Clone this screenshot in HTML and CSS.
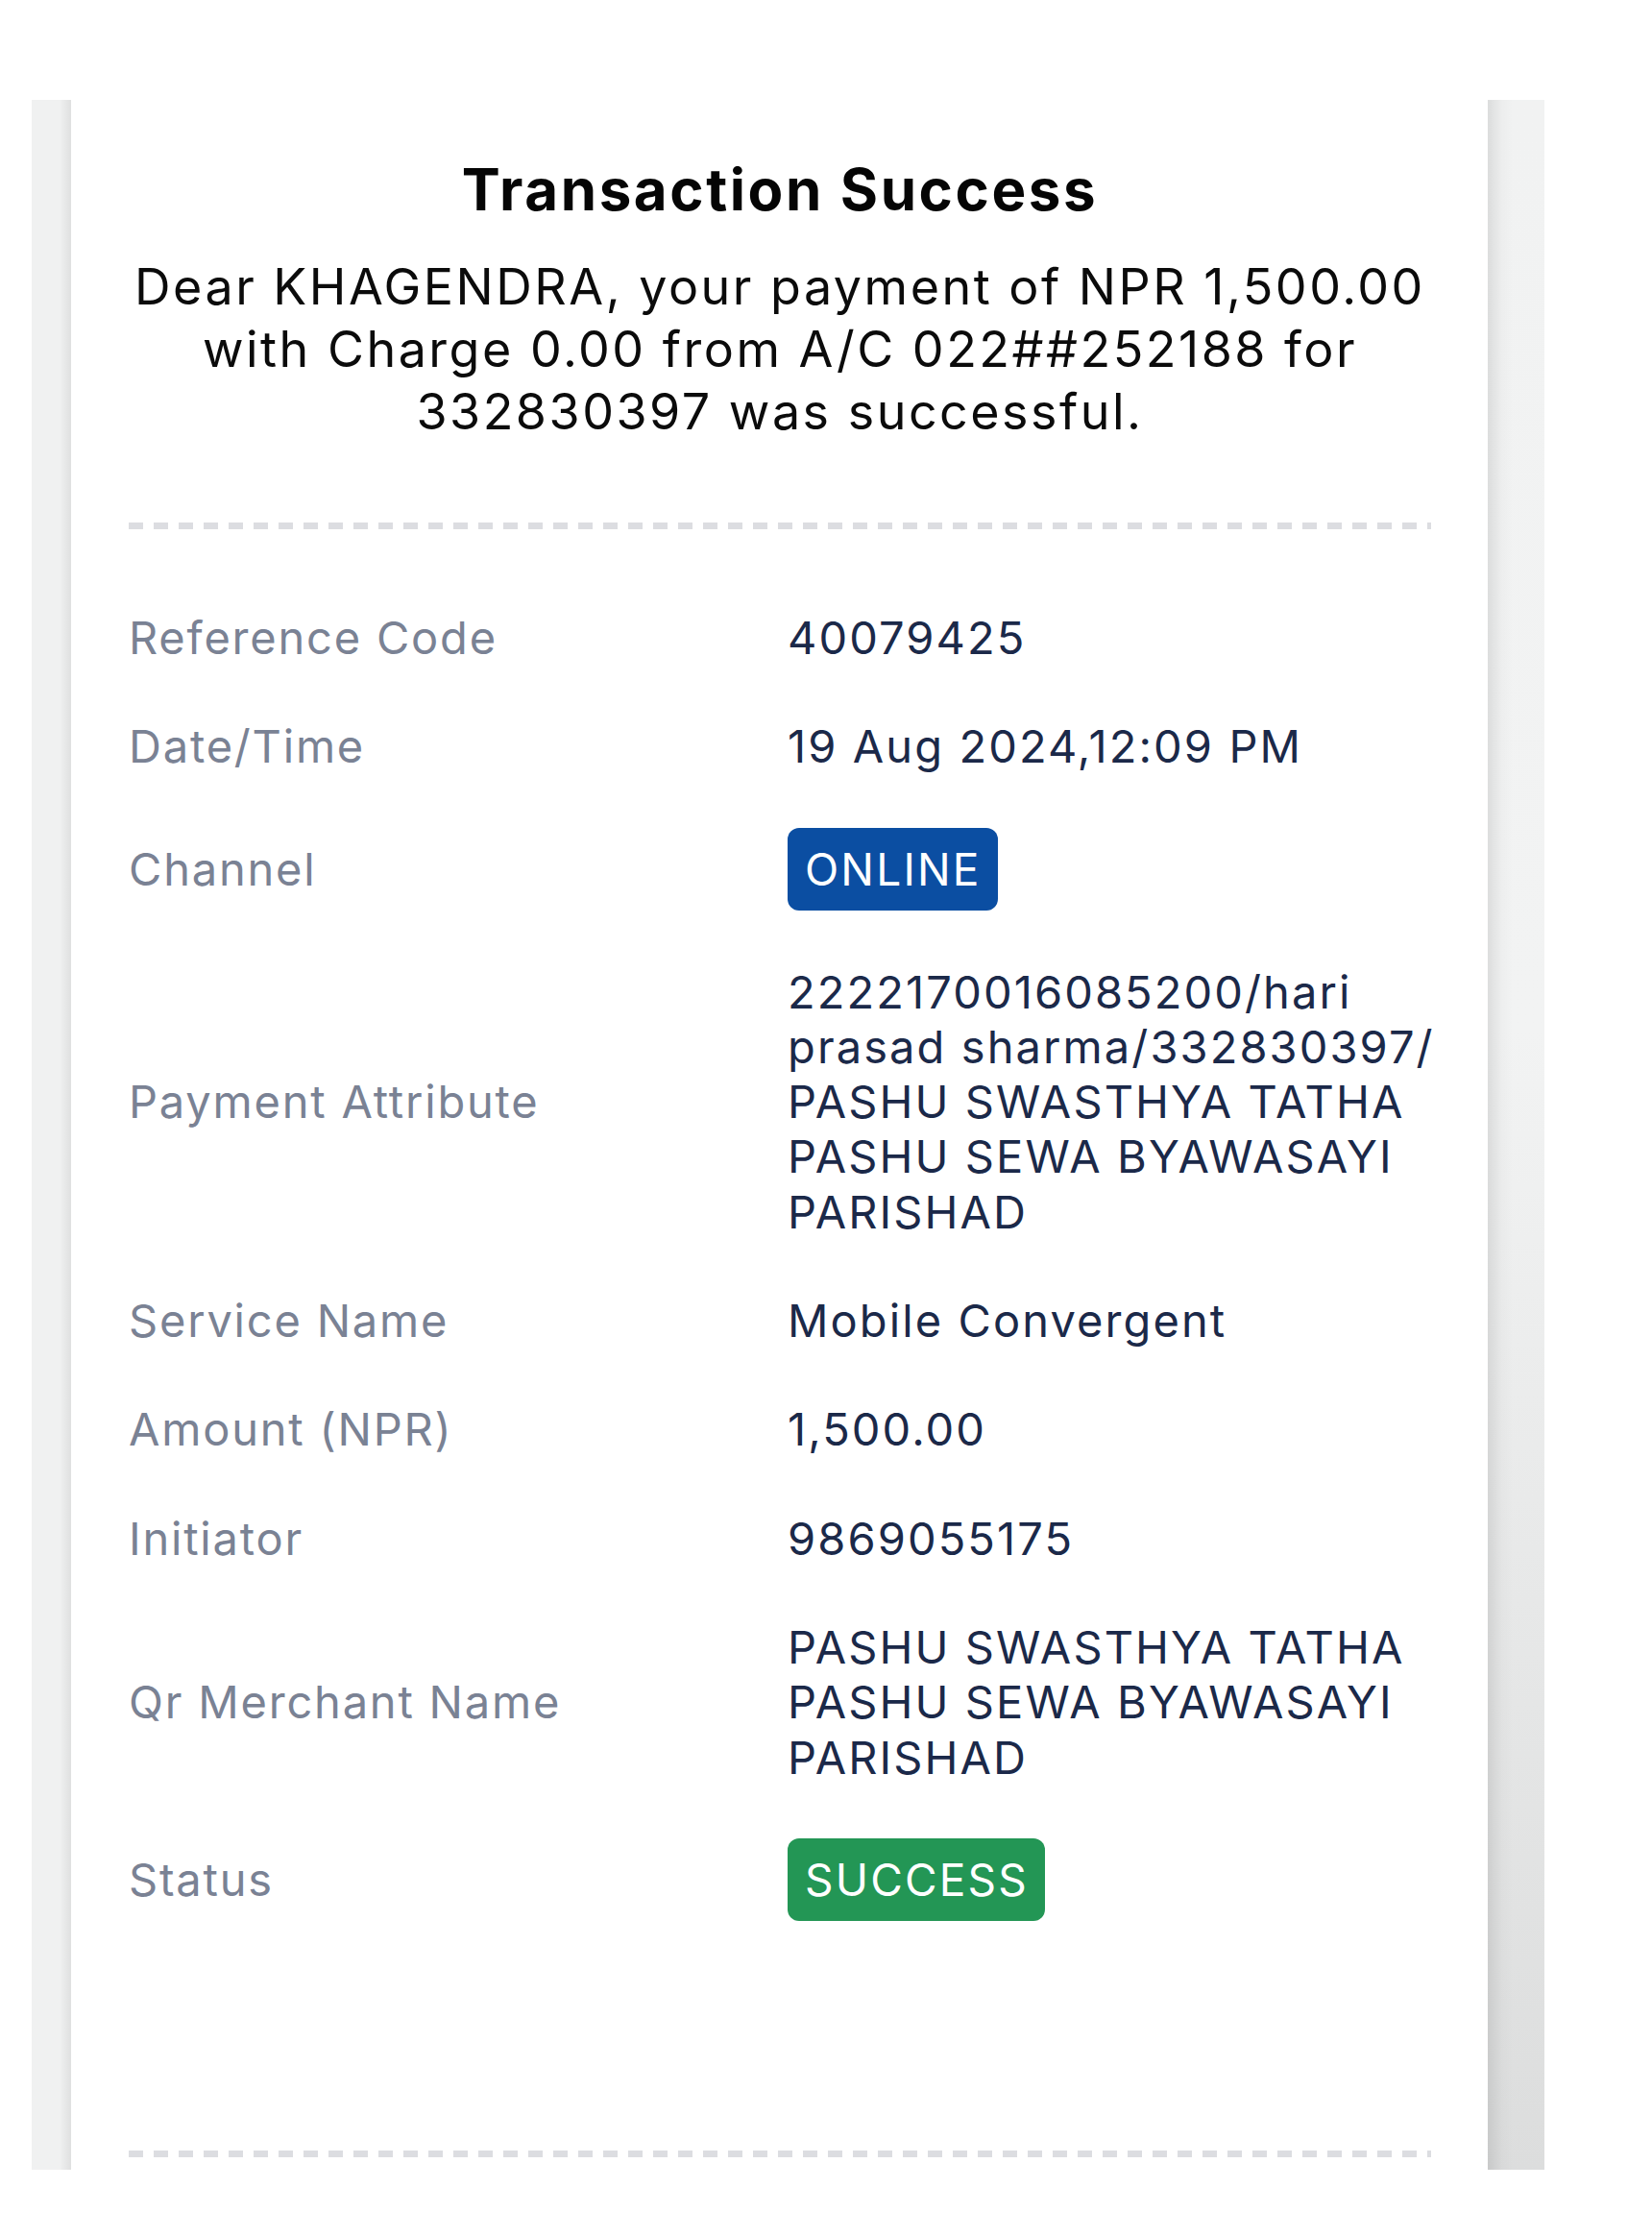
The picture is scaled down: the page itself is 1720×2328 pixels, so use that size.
FILE: index.html
```html
<!DOCTYPE html>
<html lang="en">
<head>
<meta charset="utf-8">
<title>Transaction Success</title>
<link rel="stylesheet" href="styles.css">
</head>
<body>
  <div class="frame">
    <div class="edge edge-left"></div>
    <main class="receipt">
      <h1 class="receipt-title">Transaction Success</h1>
      <p class="receipt-message">Dear KHAGENDRA, your payment of NPR 1,500.00 with Charge 0.00 from A/C 022##252188 for 332830397 was successful.</p>
      <div class="dash"></div>
      <dl class="details">
        <dt>Reference Code</dt>
        <dd>40079425</dd>
        <dt>Date/Time</dt>
        <dd>19 Aug 2024,12:09 PM</dd>
        <dt>Channel</dt>
        <dd><span class="pill pill-blue">ONLINE</span></dd>
        <dt>Payment Attribute</dt>
        <dd>2222170016085200/hari prasad sharma/332830397/ PASHU SWASTHYA TATHA PASHU SEWA BYAWASAYI PARISHAD</dd>
        <dt>Service Name</dt>
        <dd>Mobile Convergent</dd>
        <dt>Amount (NPR)</dt>
        <dd>1,500.00</dd>
        <dt>Initiator</dt>
        <dd>9869055175</dd>
        <dt>Qr Merchant Name</dt>
        <dd>PASHU SWASTHYA TATHA PASHU SEWA BYAWASAYI PARISHAD</dd>
        <dt>Status</dt>
        <dd><span class="pill pill-green">SUCCESS</span></dd>
      </dl>
      <div class="dash dash-bottom"></div>
    </main>
    <div class="edge edge-right"></div>
  </div>
</body>
</html>
```

FILE: styles.css
```css
html, body {
  margin: 0;
  padding: 0;
  background: #ffffff;
}

body {
  font-family: Inter, "Noto Sans", "Liberation Sans", sans-serif;
  color: #000;
}

.frame {
  display: flex;
  margin: 104px 0 0 33px;
  width: 1575px;
  height: 2155px;
  overflow: hidden;
}

.edge {
  flex: none;
}

.edge-left {
  width: 41px;
  background:
    linear-gradient(to right, rgba(0,0,0,0) 70%, rgba(0,0,0,0.07) 100%),
    #f0f1f1;
}

.edge-right {
  width: 59px;
  background:
    linear-gradient(to right, rgba(0,0,0,0.09) 0%, rgba(0,0,0,0.02) 25%, rgba(0,0,0,0) 45%),
    linear-gradient(to bottom, #f1f2f2 0%, #f2f3f3 45%, #e4e5e5 80%, #dcdddd 100%);
}

.receipt {
  flex: 1;
  min-width: 0;
  background: #ffffff;
  padding: 57px 59px 0 60px;
  display: flex;
  flex-direction: column;
}

.receipt-title {
  margin: 0;
  font-size: 60px;
  line-height: 72px;
  font-weight: 700;
  text-align: center;
  color: #050505;
  letter-spacing: 2.6px;
}

.receipt-message {
  margin: 33px -6px 0;
  font-size: 52px;
  line-height: 65px;
  font-weight: 400;
  text-align: center;
  color: #0b0b0b;
  letter-spacing: 2.5px;
}

.dash {
  height: 7px;
  margin-top: 83px;
  background: repeating-linear-gradient(to right, #dcdde1 0 15px, transparent 15px 26px);
}

.details {
  margin: 84px -14px 0 0;
  display: grid;
  grid-template-columns: 686px 1fr;
  row-gap: 56px;
  align-items: center;
  font-size: 47px;
  line-height: 57.3px;
  letter-spacing: 2.1px;
}

.details dt {
  color: #7a8294;
  letter-spacing: 1.8px;
}

.details dd {
  margin: 0;
  color: #1b2949;
}

.pill {
  display: inline-block;
  height: 86px;
  line-height: 86px;
  padding: 0 17px 0 18px;
  border-radius: 12px;
  color: #ffffff;
  font-size: 46px;
  letter-spacing: 2.2px;
  vertical-align: top;
}

.pill-blue {
  background: #0b4ea2;
}

.pill-green {
  background: #239655;
}

.dash-bottom {
  margin-top: 239px;
}
```
